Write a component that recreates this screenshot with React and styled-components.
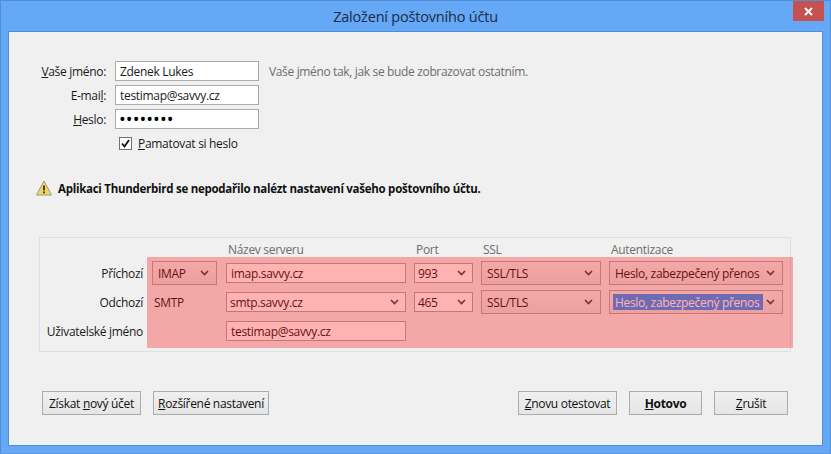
import React from 'react';
import styled, { createGlobalStyle } from 'styled-components';

const Global = createGlobalStyle`
  html, body { margin: 0; padding: 0; width: 831px; height: 454px; overflow: hidden; }
  body { font-family: "Open Sans", "Noto Sans", "Liberation Sans", sans-serif; font-size: 12px; color: #1a1a1a; }
  * { box-sizing: border-box; }
  u { text-underline-offset: 1px; text-decoration-thickness: 1px; }
`;

const Window = styled.div`
  width: 831px; height: 454px; display: flex; flex-direction: column;
  background: #65a8f5; border: 1px solid #4f8fd8; border-bottom-color: #5b9be6; padding: 0 7px 7px; position: relative;
`;
const TitleBar = styled.div`
  height: 30px; flex: none; display: flex; align-items: center; justify-content: center;
  font-size: 14.5px; letter-spacing: -0.2px; color: #1b2a45; padding-top: 1px;
`;
const CloseButton = styled.div`
  position: absolute; top: 0; right: 6px; width: 31px; height: 20px; background: #c75050;
  display: flex; align-items: center; justify-content: center;
`;
const Body = styled.div`
  flex: 1; display: flex; flex-direction: column; background: #f0f0f0;
  border: 1px solid #4f8fd8; padding-top: 29px;
  letter-spacing: -0.31px;
`;
const Form = styled.div`
  display: grid; grid-template-columns: 106px 144px auto; justify-content: start; row-gap: 4px; align-items: center;
`;
const FormLabel = styled.div`
  text-align: right; padding-right: 9px; white-space: nowrap;
`;
const Field = styled.div`
  height: 20px; background: #fff; border: 1px solid #ababab; padding-left: 4px;
  display: flex; align-items: center; white-space: nowrap;
`;
const Dots = styled.span`
  font-size: 18px; letter-spacing: 0.05px; color: #000; line-height: 1; margin-left: -1px;
`;
const Hint = styled.div`
  color: #6d6d6d; padding-left: 10px; white-space: nowrap; letter-spacing: -0.35px;
`;
const CheckRow = styled.div`
  grid-column: 2 / 4; display: flex; align-items: center; gap: 6px; padding-left: 4px; height: 20px;
`;
const CheckBox = styled.div`
  width: 13px; height: 13px; background: #fff; border: 1px solid #707070; display: flex; align-items: center; justify-content: center;
`;
const Warning = styled.div`
  display: flex; align-items: center; gap: 6px; margin: 25px 0 0 27px; height: 20px; font-weight: 700; font-size: 11.5px; letter-spacing: -0.27px; color: #111;
`;
const Panel = styled.div`
  position: relative; margin: 39px 31px 0 30px; height: 115px; border: 1px solid #dfdfdf; padding: 5px 0 0 0;
  display: grid; grid-template-columns: 112px 74px 188px 67px 128px 174px; grid-template-rows: 13px 24px 24px 24px; row-gap: 5px; align-items: center;
`;
const ColHead = styled.div`
  color: #6d6d6d; padding-left: 2px; grid-column: ${p => p.$col}; line-height: 13px;
`;
const RowLabel = styled.div`
  text-align: right; padding-right: 9px; white-space: nowrap; grid-column: 1;
`;
const Combo = styled.div`
  height: 24px; width: ${p => p.$w}px; border: 1px solid #acacac; background: linear-gradient(#f0f0f0, #e5e5e5);
  display: flex; align-items: center; justify-content: space-between; padding: 0 7px 0 5px; white-space: nowrap;
`;
const Editable = styled.div`
  height: 20px; width: ${p => p.$w}px; border: 1px solid #ababab; background: #fff;
  display: flex; align-items: center; justify-content: space-between; padding: 0 6px 0 ${p => p.$pad ?? 4}px; white-space: nowrap;
`;
const Plain = styled.div`
  padding-left: 2px; grid-column: 2;
`;
const Selected = styled.span`
  background: #3399ff; color: #fff; height: 16px; width: 150px; margin-left: -2px; padding-left: 2px; display: flex; align-items: center;
`;
const Overlay = styled.div`
  position: absolute; left: 107px; top: 19px; width: 646px; height: 91px; background: rgba(255, 0, 0, 0.3); pointer-events: none;
`;
const Footer = styled.div`
  margin-top: 39px; display: flex; padding: 0 34px 0 33px;
`;
const Button = styled.div`
  height: 24px; width: ${p => p.$w}px; flex: none; border: 1px solid #acacac; background: linear-gradient(#f0f0f0, #e5e5e5);
  display: flex; align-items: center; justify-content: center; white-space: nowrap; margin-left: ${p => p.$ml || 0}px;
  font-weight: ${p => p.$bold ? 700 : 400}; color: #111;
`;

const Chevron = () => (
  <svg width="9" height="6" viewBox="0 0 9 6" fill="none"><path d="M1 1l3.5 3.5L8 1" stroke="#444" strokeWidth="1.6" /></svg>
);

export default function App() {
  return (
    <>
      <Global />
      <Window>
        <TitleBar>Založení poštovního účtu</TitleBar>
        <CloseButton>
          <svg width="9" height="9" viewBox="0 0 9 9"><path d="M1 1l7 7M8 1L1 8" stroke="#fff" strokeWidth="2" /></svg>
        </CloseButton>
        <Body>
          <Form>
            <FormLabel><u>V</u>aše jméno:</FormLabel>
            <Field>Zdenek Lukes</Field>
            <Hint>Vaše jméno tak, jak se bude zobrazovat ostatním.</Hint>
            <FormLabel>E-mai<u>l</u>:</FormLabel>
            <Field>testimap@savvy.cz</Field>
            <span />
            <FormLabel><u>H</u>eslo:</FormLabel>
            <Field><Dots>••••••••</Dots></Field>
            <span />
            <span />
            <CheckRow>
              <CheckBox>
                <svg width="9" height="9" viewBox="0 0 9 9" fill="none"><path d="M1 4.5l2.5 3L8 1" stroke="#111" strokeWidth="1.8" /></svg>
              </CheckBox>
              <span><u>P</u>amatovat si heslo</span>
            </CheckRow>
          </Form>
          <Warning>
            <svg width="16" height="16" viewBox="0 0 16 16">
              <path d="M8 1L15.5 15H.5z" fill="#f2d55c" stroke="#9a9a8a" strokeWidth="1" strokeLinejoin="round" />
              <path d="M8 5.5v5" stroke="#333" strokeWidth="1.8" />
              <rect x="7.1" y="11.5" width="1.8" height="1.8" fill="#333" />
            </svg>
            Aplikaci Thunderbird se nepodařilo nalézt nastavení vašeho poštovního účtu.
          </Warning>
          <Panel>
            <ColHead $col={3}>Název serveru</ColHead>
            <ColHead $col={4}>Port</ColHead>
            <ColHead $col={5}>SSL</ColHead>
            <ColHead $col={6}>Autentizace</ColHead>

            <RowLabel>Příchozí</RowLabel>
            <Combo $w={65}>IMAP<Chevron /></Combo>
            <Editable $w={180}>imap.savvy.cz</Editable>
            <Editable $w={59} $pad={3}>993<Chevron /></Editable>
            <Combo $w={120}>SSL/TLS<Chevron /></Combo>
            <Combo $w={174}>Heslo, zabezpečený přenos<Chevron /></Combo>

            <RowLabel>Odchozí</RowLabel>
            <Plain>SMTP</Plain>
            <Editable $w={180} $pad={3}>smtp.savvy.cz<Chevron /></Editable>
            <Editable $w={59} $pad={3}>465<Chevron /></Editable>
            <Combo $w={120}>SSL/TLS<Chevron /></Combo>
            <Combo $w={174}><Selected>Heslo, zabezpečený přenos</Selected><Chevron /></Combo>

            <RowLabel>Uživatelské jméno</RowLabel>
            <span />
            <Editable $w={180}>testimap@savvy.cz</Editable>

            <Overlay />
          </Panel>
          <Footer>
            <Button $w={99}>Získat&nbsp;<u>n</u>ový účet</Button>
            <Button $w={116} $ml={12}><u>R</u>ozšířené nastavení</Button>
            <Button $w={99} $ml={249}><u>Z</u>novu otestovat</Button>
            <Button $w={73} $ml={12} $bold><u>H</u>otovo</Button>
            <Button $w={74} $ml={12}><u>Z</u>rušit</Button>
          </Footer>
        </Body>
      </Window>
    </>
  );
}
